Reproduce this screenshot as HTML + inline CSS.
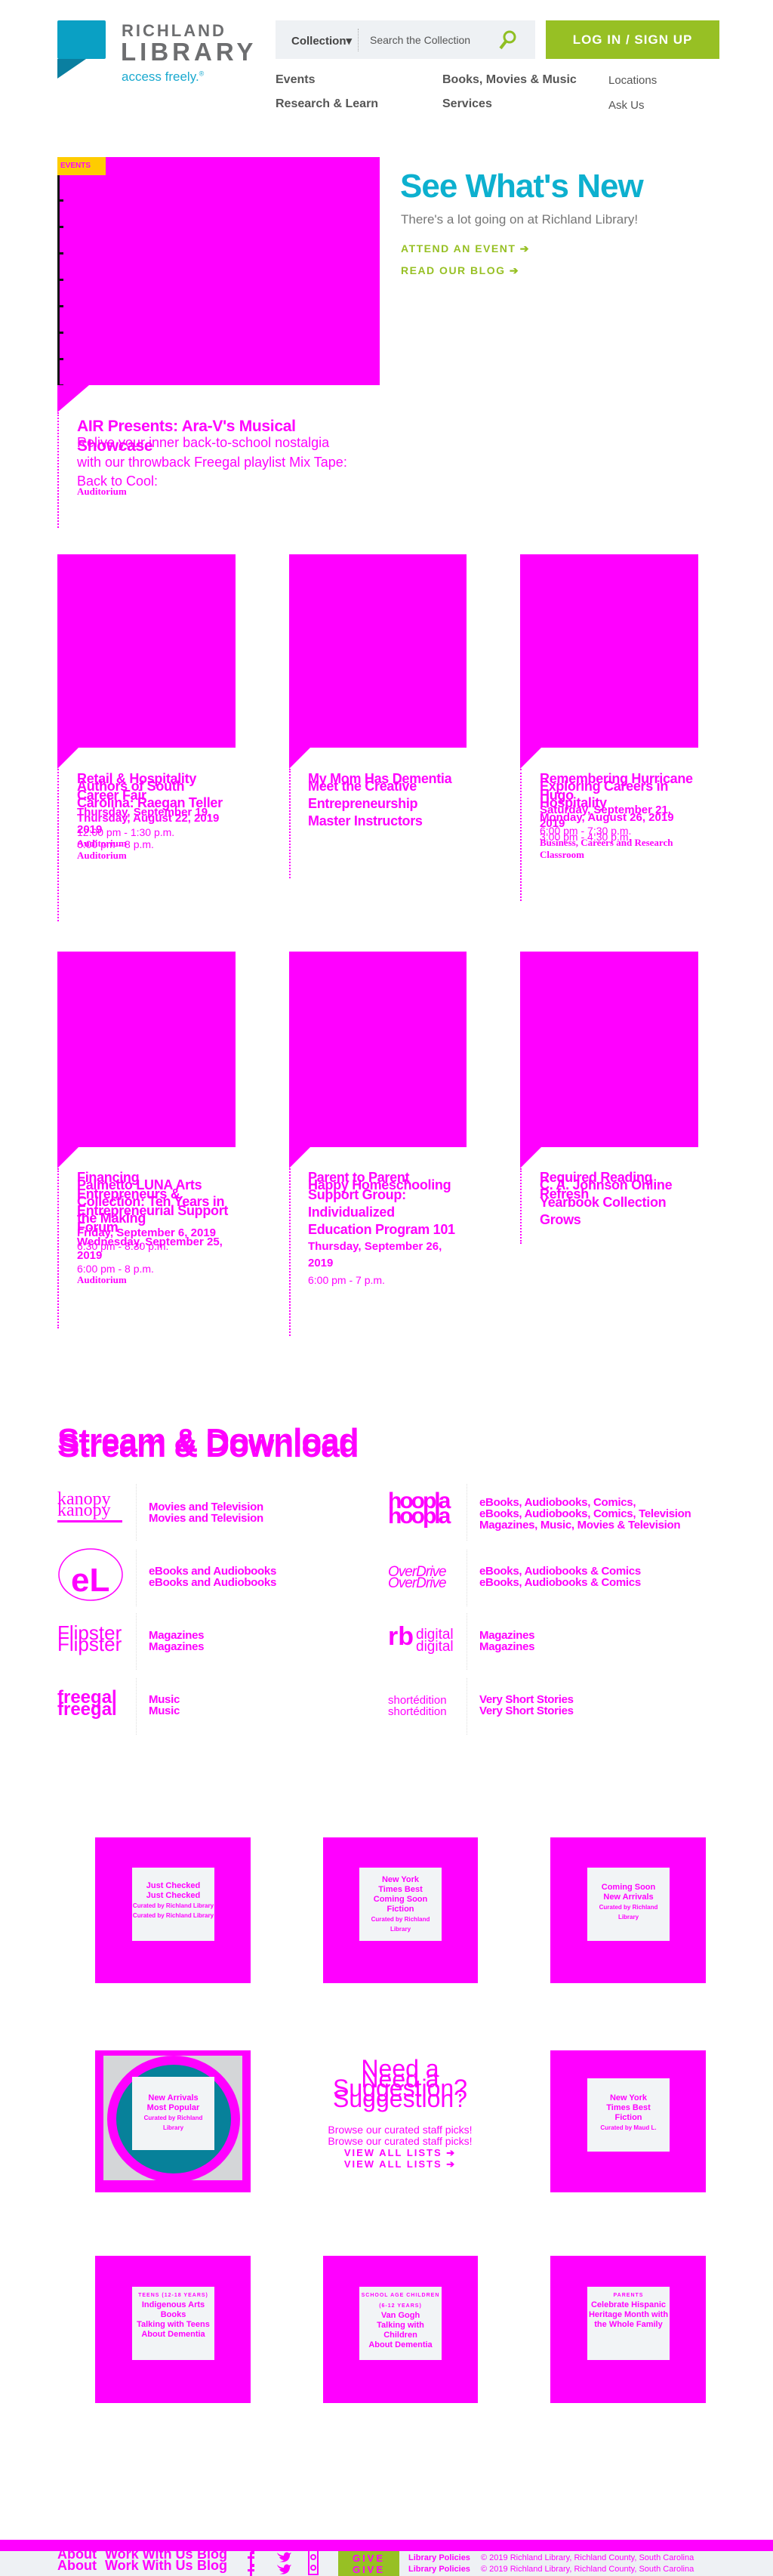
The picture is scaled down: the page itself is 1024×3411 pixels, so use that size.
<!DOCTYPE html>
<html><head><meta charset="utf-8"><style>
*{margin:0;padding:0;box-sizing:border-box}
body{width:1024px;height:3411px;position:relative;background:#fff;font-family:"Liberation Sans",sans-serif;overflow:hidden}
.a{position:absolute}
.m{color:#f0f}
.mb{background:#f0f}
.t{font-weight:bold;font-size:18px;line-height:22px;color:#f0f;letter-spacing:-0.3px}
.d{font-weight:bold;font-size:15px;line-height:23px;color:#f0f}
.tm{font-size:14px;line-height:16px;color:#f0f}
.au{font-family:"Liberation Serif",serif;font-weight:bold;font-size:13px;line-height:13px;color:#f0f}
.dot{position:absolute;border-left:2px dotted #f0f;width:0}
.cut{position:absolute;width:0;height:0;border-top:28px solid #f0f;border-right:28px solid transparent}
.nav{font-size:16px;color:#555;font-weight:bold}
.sd{font-weight:bold;font-size:15px;line-height:15px;color:#f0f;letter-spacing:-0.3px}
.vd{position:absolute;border-left:1px dotted #ddd;height:75px}
.tile{position:absolute;background:#f0f}
.in{position:absolute;background:#f2f4f6;text-align:center;color:#f0f;font-weight:bold}
.ft{font-weight:bold;font-size:18px;line-height:15px;color:#f0f}
</style></head><body>

<!-- header -->
<div class="a" style="left:76px;top:27px;width:64px;height:51px;background:#0aa0c4;border-radius:2px"></div>
<div class="a" style="left:76px;top:78px;width:0;height:0;border-top:26px solid #0a7fa0;border-left:38px solid transparent;transform:scaleX(-1);left:76px"></div>
<div class="a" style="left:161px;top:28px;font-size:22px;letter-spacing:3px;color:#6d6e70;font-weight:bold">RICHLAND</div>
<div class="a" style="left:160px;top:50px;font-size:33px;letter-spacing:5px;color:#6d6e70;font-weight:bold">LIBRARY</div>
<div class="a" style="left:161px;top:92px;font-size:17px;color:#1aa9cf">access freely.<sup style="font-size:9px">®</sup></div>

<div class="a" style="left:365px;top:27px;width:344px;height:51px;background:#eef1f4"></div>
<div class="a" style="left:386px;top:45px;font-size:15px;font-weight:bold;color:#444">Collection▾</div>
<div class="a" style="left:474px;top:38px;height:30px;border-left:1px dotted #aaa"></div>
<div class="a" style="left:490px;top:45px;font-size:14px;color:#555">Search the Collection</div>
<svg class="a" style="left:660px;top:39px" width="26" height="28" viewBox="0 0 26 28"><circle cx="15" cy="10" r="7" fill="none" stroke="#8fbf22" stroke-width="3"/><line x1="10" y1="16" x2="3" y2="25" stroke="#8fbf22" stroke-width="4"/></svg>
<div class="a" style="left:723px;top:27px;width:230px;height:51px;background:#97c024;color:#fff;font-weight:bold;font-size:17px;letter-spacing:1px;text-align:center;line-height:51px">LOG IN / SIGN UP</div>

<div class="a nav" style="left:365px;top:97px">Events</div>
<div class="a nav" style="left:586px;top:97px">Books, Movies &amp; Music</div>
<div class="a" style="left:806px;top:98px;font-size:15px;color:#555">Locations</div>
<div class="a nav" style="left:365px;top:129px">Research &amp; Learn</div>
<div class="a nav" style="left:586px;top:129px">Services</div>
<div class="a" style="left:806px;top:131px;font-size:15px;color:#555">Ask Us</div>

<!-- hero -->
<div class="a mb" style="left:76px;top:208px;width:427px;height:302px"></div>
<div class="a" style="left:76px;top:232px;width:8px;height:280px;background:repeating-linear-gradient(#f0f 0 32px,#111 32px 35px)"></div>
<div class="a" style="left:76px;top:232px;width:3px;height:280px;background:#111"></div>
<div class="a" style="left:76px;top:208px;width:64px;height:24px;background:#fc0;font-size:10px;font-weight:bold;color:#f0f;padding:6px 4px">EVENTS</div>
<div class="cut" style="left:76px;top:510px;border-top-width:36px;border-right-width:42px"></div>
<div class="dot" style="left:76px;top:546px;height:153px"></div>
<div class="a t" style="left:102px;top:552px;font-size:21px;line-height:26px;width:320px">AIR Presents: Ara-V's Musical Showcase</div>
<div class="a" style="left:102px;top:576px;font-size:18px;color:#f0f;white-space:nowrap">Relive your inner back-to-school nostalgia</div>
<div class="a" style="left:102px;top:602px;font-size:18px;color:#f0f;white-space:nowrap">with our throwback Freegal playlist Mix Tape:</div>
<div class="a" style="left:102px;top:627px;font-size:18px;color:#f0f">Back to Cool:</div>
<div class="a au" style="left:102px;top:644px">Auditorium</div>

<div class="a" style="left:530px;top:222px;font-size:44px;font-weight:bold;color:#0db0cf;letter-spacing:-1px">See What's New</div>
<div class="a" style="left:531px;top:281px;font-size:17px;color:#777">There's a lot going on at Richland Library!</div>
<div class="a" style="left:531px;top:321px;font-size:14px;font-weight:bold;color:#97c024;letter-spacing:1.5px">ATTEND AN EVENT ➔</div>
<div class="a" style="left:531px;top:350px;font-size:14px;font-weight:bold;color:#97c024;letter-spacing:1.5px">READ OUR BLOG ➔</div>

<!-- cards row 1 -->
<div class="a mb" style="left:76px;top:734px;width:236px;height:256px"></div>
<div class="a mb" style="left:383px;top:734px;width:235px;height:256px"></div>
<div class="a mb" style="left:689px;top:734px;width:236px;height:256px"></div>
<div class="cut" style="left:76px;top:990px"></div><div class="cut" style="left:383px;top:990px"></div><div class="cut" style="left:689px;top:990px"></div>
<div class="dot" style="left:76px;top:1018px;height:202px"></div>
<div class="dot" style="left:383px;top:1018px;height:145px"></div>
<div class="dot" style="left:689px;top:1018px;height:175px"></div>

<div class="a" style="left:102px;top:1020px;width:205px">
<div class="t">Retail &amp; Hospitality Career Fair</div><div class="d">Thursday, September 19, 2019</div><div class="tm">6:00 pm - 8 p.m.</div><div class="au">Auditorium</div></div>
<div class="a" style="left:102px;top:1030px;width:205px">
<div class="t">Authors of South Carolina: Raegan Teller</div><div class="d" style="line-height:20px">Thursday, August 22, 2019</div><div class="tm">12:00 pm - 1:30 p.m.</div><div class="au">Auditorium</div></div>

<div class="a" style="left:408px;top:1020px;width:200px"><div class="t">My Mom Has Dementia</div></div>
<div class="a" style="left:408px;top:1030px;width:205px"><div class="t" style="line-height:23px">Meet the Creative Entrepreneurship Master Instructors</div></div>

<div class="a" style="left:715px;top:1020px;width:205px">
<div class="t">Remembering Hurricane Hugo</div><div class="d" style="line-height:18px">Saturday, September 21, 2019</div><div class="tm">3:00 pm - 4:30 p.m.</div></div>
<div class="a" style="left:715px;top:1030px;width:205px">
<div class="t">Exploring Careers in Hospitality</div><div class="d" style="line-height:18px">Monday, August 26, 2019</div><div class="tm">6:00 pm - 7:30 p.m.</div><div class="au" style="line-height:16px">Business, Careers and Research Classroom</div></div>

<!-- cards row 2 -->
<div class="a mb" style="left:76px;top:1260px;width:236px;height:259px"></div>
<div class="a mb" style="left:383px;top:1260px;width:235px;height:259px"></div>
<div class="a mb" style="left:689px;top:1260px;width:236px;height:259px"></div>
<div class="cut" style="left:76px;top:1519px"></div><div class="cut" style="left:383px;top:1519px"></div><div class="cut" style="left:689px;top:1519px"></div>
<div class="dot" style="left:76px;top:1547px;height:212px"></div>
<div class="dot" style="left:383px;top:1547px;height:222px"></div>
<div class="dot" style="left:689px;top:1547px;height:100px"></div>

<div class="a" style="left:102px;top:1548px;width:205px">
<div class="t">Financing Entrepreneurs &amp; Entrepreneurial Support Forum</div><div class="d" style="line-height:18px">Wednesday, September 25, 2019</div><div class="tm">6:00 pm - 8 p.m.</div><div class="au">Auditorium</div></div>
<div class="a" style="left:102px;top:1558px;width:205px">
<div class="t">Palmetto LUNA Arts Collection: Ten Years in the Making</div><div class="d" style="line-height:18px">Friday, September 6, 2019</div><div class="tm">6:30 pm - 8:30 p.m.</div></div>

<div class="a" style="left:408px;top:1548px;width:200px">
<div class="t" style="line-height:23px">Parent to Parent Support Group: Individualized Education Program 101</div><div class="d" style="line-height:22px">Thursday, September 26, 2019</div><div class="tm" style="line-height:22px">6:00 pm - 7 p.m.</div></div>
<div class="a" style="left:408px;top:1558px;width:200px"><div class="t">Happy Homeschooling</div></div>

<div class="a" style="left:715px;top:1548px;width:205px"><div class="t">Required Reading Refresh</div></div>
<div class="a" style="left:715px;top:1558px;width:205px"><div class="t" style="line-height:23px">C. A. Johnson Online Yearbook Collection Grows</div></div>

<!-- stream -->
<div class="a" style="left:76px;top:1886px;font-size:44px;font-weight:bold;color:#f0f;letter-spacing:-1px;line-height:44px">Stream &amp; Download</div>
<div class="a" style="left:76px;top:1893px;font-size:44px;font-weight:bold;color:#f0f;letter-spacing:-1px;line-height:44px">Stream &amp; Download</div>

<div class="vd" style="left:180px;top:1965px"></div><div class="vd" style="left:180px;top:2052px"></div><div class="vd" style="left:180px;top:2136px"></div><div class="vd" style="left:180px;top:2222px"></div>
<div class="vd" style="left:618px;top:1965px"></div><div class="vd" style="left:618px;top:2052px"></div><div class="vd" style="left:618px;top:2136px"></div><div class="vd" style="left:618px;top:2222px"></div>

<div class="a" style="left:76px;top:1978px;font-family:'Liberation Serif',serif;font-size:24px;line-height:15px;color:#f0f">kanopy<br>kanopy</div>
<div class="a mb" style="left:76px;top:2013px;width:86px;height:3px"></div>
<div class="a sd" style="left:197px;top:1988px">Movies and Television<br>Movies and Television</div>

<svg class="a" style="left:76px;top:2045px" width="88" height="80"><ellipse cx="44" cy="40" rx="42" ry="34" fill="none" stroke="#f0f" stroke-width="1.5"/><text x="18" y="62" font-family="Liberation Sans" font-weight="bold" font-size="44" fill="#f0f">eL</text></svg>
<div class="a sd" style="left:197px;top:2073px">eBooks and Audiobooks<br>eBooks and Audiobooks</div>

<div class="a" style="left:76px;top:2155px;font-size:26px;line-height:15px;color:#f0f">Flipster<br>Flipster</div>
<div class="a sd" style="left:197px;top:2158px">Magazines<br>Magazines</div>

<div class="a" style="left:76px;top:2240px;font-size:24px;font-weight:bold;line-height:16px;color:#f0f">freegal<br>freegal</div>
<div class="a sd" style="left:197px;top:2243px">Music<br>Music</div>

<div class="a" style="left:514px;top:1978px;font-size:30px;font-weight:bold;line-height:20px;color:#f0f;letter-spacing:-3px">hoopla<br>hoopla</div>
<div class="a sd" style="left:635px;top:1982px">eBooks, Audiobooks, Comics,<br>eBooks, Audiobooks, Comics, Television<br>Magazines, Music, Movies &amp; Television</div>

<div class="a" style="left:514px;top:2074px;font-size:19px;font-style:italic;line-height:15px;color:#f0f;letter-spacing:-1px">OverDrive<br>OverDrive</div>
<div class="a sd" style="left:635px;top:2073px">eBooks, Audiobooks &amp; Comics<br>eBooks, Audiobooks &amp; Comics</div>

<div class="a" style="left:514px;top:2150px;font-size:34px;font-weight:bold;color:#f0f;line-height:34px">rb</div>
<div class="a" style="left:551px;top:2157px;font-size:19px;line-height:16px;color:#f0f">digital<br>digital</div>
<div class="a sd" style="left:635px;top:2158px">Magazines<br>Magazines</div>

<div class="a" style="left:514px;top:2244px;font-size:15px;line-height:15px;color:#f0f">shortédition<br>shortédition</div>
<div class="a sd" style="left:635px;top:2243px">Very Short Stories<br>Very Short Stories</div>

<!-- tiles -->
<div class="tile" style="left:126px;top:2433px;width:206px;height:193px"></div>
<div class="tile" style="left:428px;top:2433px;width:205px;height:193px"></div>
<div class="tile" style="left:729px;top:2433px;width:206px;height:193px"></div>
<div class="in" style="left:175px;top:2473px;width:109px;height:97px;padding-top:18px;font-size:11px;line-height:13px">Just Checked<br>Just Checked<br><span style="font-size:8px;line-height:9px">Curated by Richland Library<br>Curated by Richland Library</span></div>
<div class="in" style="left:476px;top:2473px;width:109px;height:97px;padding-top:10px;font-size:11px;line-height:13px">New York<br>Times Best<br>Coming Soon<br>Fiction<br><span style="font-size:8px;line-height:9px">Curated by Richland<br>Library</span></div>
<div class="in" style="left:778px;top:2473px;width:109px;height:97px;padding-top:20px;font-size:11px;line-height:13px">Coming Soon<br>New Arrivals<br><span style="font-size:8px;line-height:9px">Curated by Richland<br>Library</span></div>

<div class="tile" style="left:126px;top:2715px;width:206px;height:188px"></div>
<div class="a" style="left:137px;top:2722px;width:184px;height:165px;background:#d4d6d8"></div>
<div class="a" style="left:142px;top:2722px;width:176px;height:168px;border-radius:50%;background:#07819a;border:12px solid #f0f"></div>
<div class="in" style="left:175px;top:2750px;width:109px;height:97px;padding-top:22px;font-size:11px;line-height:13px">New Arrivals<br>Most Popular<br><span style="font-size:8px;line-height:9px">Curated by Richland<br>Library</span></div>
<div class="tile" style="left:729px;top:2715px;width:206px;height:188px"></div>
<div class="in" style="left:778px;top:2752px;width:109px;height:97px;padding-top:20px;font-size:11px;line-height:13px">New York<br>Times Best<br>Fiction<br><span style="font-size:8px;line-height:9px">Curated by Maud L.</span></div>

<div class="a" style="left:415px;top:2726px;width:230px;text-align:center;color:#f0f;font-size:32px;line-height:26px">Need a<br>Suggestion?</div>
<div class="a" style="left:415px;top:2740px;width:230px;text-align:center;color:#f0f;font-size:32px;line-height:26px">Need a<br>Suggestion?</div>
<div class="a" style="left:405px;top:2813px;width:250px;text-align:center;color:#f0f;font-size:14px;line-height:15px">Browse our curated staff picks!<br>Browse our curated staff picks!</div>
<div class="a" style="left:405px;top:2843px;width:250px;text-align:center;color:#f0f;font-size:13px;font-weight:bold;letter-spacing:2px;line-height:15px">VIEW ALL LISTS ➔<br>VIEW ALL LISTS ➔</div>

<div class="tile" style="left:126px;top:2987px;width:206px;height:195px"></div>
<div class="tile" style="left:428px;top:2987px;width:205px;height:195px"></div>
<div class="tile" style="left:729px;top:2987px;width:206px;height:195px"></div>
<div class="in" style="left:175px;top:3028px;width:109px;height:97px;padding-top:4px;font-size:11px;line-height:13px"><span style="font-size:7px;letter-spacing:1px">TEENS (12-18 YEARS)</span><br>Indigenous Arts Books<br>Talking with Teens About Dementia</div>
<div class="in" style="left:476px;top:3028px;width:109px;height:97px;padding-top:4px;font-size:11px;line-height:13px"><span style="font-size:7px;letter-spacing:1px">SCHOOL AGE CHILDREN (6-12 YEARS)</span><br>Van Gogh<br>Talking with Children<br>About Dementia</div>
<div class="in" style="left:778px;top:3028px;width:109px;height:97px;padding-top:4px;font-size:11px;line-height:13px"><span style="font-size:7px;letter-spacing:1px">PARENTS</span><br>Celebrate Hispanic Heritage Month with the Whole Family</div>

<!-- footer -->
<div class="a mb" style="left:0;top:3363px;width:1024px;height:15px"></div>
<div class="a" style="left:0;top:3378px;width:1024px;height:33px;background:#eef1f4"></div>
<div class="a ft" style="left:76px;top:3375px">About<br>About</div>
<div class="a ft" style="left:139px;top:3375px">Work With Us<br>Work With Us</div>
<div class="a ft" style="left:261px;top:3375px">Blog<br>Blog</div>
<svg class="a" style="left:326px;top:3376px" width="12" height="35"><path d="M8 2h3v4H8v3h3v3H8v10H5V12H2V9h3V5c0-2 1-3 3-3z" fill="#f0f"/><path d="M8 19h3v4H8v3h3v3H8v6H5v-6H2v-3h3v-3c0-2 1-4 3-4z" fill="#f0f"/></svg>
<svg class="a" style="left:365px;top:3376px" width="22" height="35"><path d="M2 4c3 3 6 4 9 4 0-4 4-6 7-3l3-1-2 3c0 7-6 11-14 9 3 0 5-1 6-2-3 0-5-2-6-4h3C5 9 3 7 2 4z" fill="#f0f"/><path d="M2 20c3 3 6 4 9 4 0-4 4-6 7-3l3-1-2 3c0 7-6 11-14 9 3 0 5-1 6-2-3 0-5-2-6-4h3c-3-1-5-3-6-6z" fill="#f0f"/></svg>
<div class="a" style="left:408px;top:3376px;width:14px;height:34px;border:2px solid #f0f"></div>
<div class="a" style="left:411px;top:3382px;width:8px;height:8px;border:2px solid #f0f;border-radius:50%"></div>
<div class="a" style="left:411px;top:3396px;width:8px;height:8px;border:2px solid #f0f;border-radius:50%"></div>
<div class="a" style="left:448px;top:3378px;width:81px;height:33px;background:#97c024;color:#f0f;font-weight:bold;font-size:13px;letter-spacing:3px;text-align:center;line-height:15px;padding-top:2px">GIVE<br>GIVE</div>
<div class="a" style="left:541px;top:3380px;font-weight:bold;font-size:11px;line-height:15px;color:#f0f">Library Policies<br>Library Policies</div>
<div class="a" style="left:637px;top:3380px;font-size:11px;line-height:15px;color:#f0f">© 2019 Richland Library, Richland County, South Carolina<br>© 2019 Richland Library, Richland County, South Carolina</div>
</body></html>
